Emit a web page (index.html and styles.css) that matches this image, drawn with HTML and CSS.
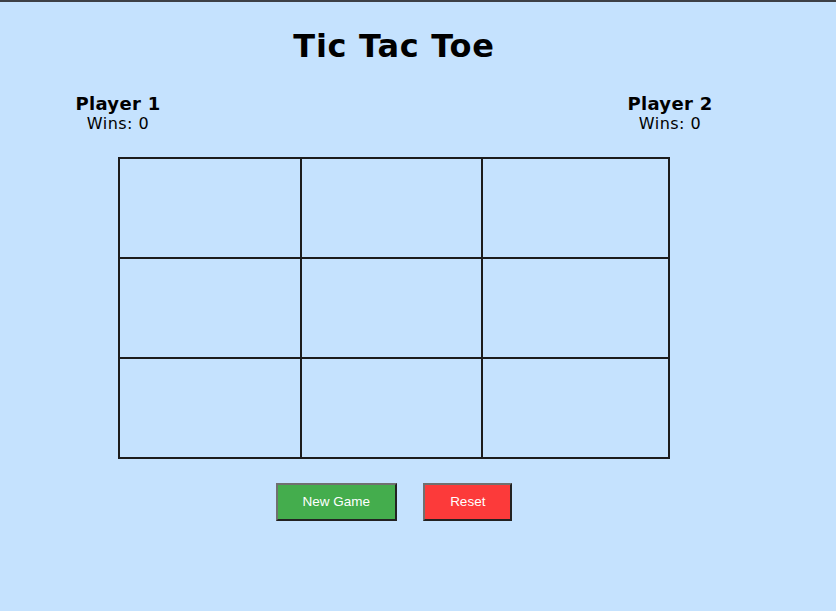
FILE: index.html
```html
<!DOCTYPE html>
<html lang="en">
<head>
<meta charset="utf-8">
<title>Tic Tac Toe</title>
<link rel="stylesheet" href="styles.css">
</head>
<body>
<div class="topbar"></div>
<main class="app">
  <h1 class="title">Tic Tac Toe</h1>
  <div class="players">
    <div class="player">
      <div class="player-name">Player 1</div>
      <div class="player-wins">Wins: 0</div>
    </div>
    <div class="player">
      <div class="player-name">Player 2</div>
      <div class="player-wins">Wins: 0</div>
    </div>
  </div>
  <div class="board">
    <div class="cell"></div><div class="cell"></div><div class="cell"></div>
    <div class="cell"></div><div class="cell"></div><div class="cell"></div>
    <div class="cell"></div><div class="cell"></div><div class="cell"></div>
  </div>
  <div class="controls">
    <button class="btn btn-new">New Game</button>
    <button class="btn btn-reset">Reset</button>
  </div>
</main>
</body>
</html>
```
FILE: styles.css
```css
html, body {
  margin: 0;
  padding: 0;
  background: #c5e2fe;
  height: 100%;
}
body {
  font-family: "DejaVu Sans", Verdana, sans-serif;
  color: #000;
}
.topbar {
  height: 2px;
  background: #3d4046;
}
.app {
  width: 552px;
  margin-left: 118px;
  display: flex;
  flex-direction: column;
}
.title {
  margin: 25px 0 0;
  font-size: 32px;
  letter-spacing: 0.7px;
  font-weight: bold;
  text-align: center;
  line-height: 38px;
}
.players {
  display: flex;
  justify-content: space-between;
  margin: 28px -60px 0;
}
.player {
  width: 120px;
  text-align: center;
}
.player-name {
  font-weight: bold;
  font-size: 18px;
  letter-spacing: 0.3px;
  line-height: 21px;
}
.player-wins {
  font-size: 16px;
  letter-spacing: 0.5px;
  line-height: 20px;
}
.board {
  margin-top: 23px;
  display: grid;
  grid-template-columns: 180px 179px 185px;
  grid-template-rows: 98px 98px 98px;
  gap: 2px;
  padding: 2px;
  background: #1c1c1c;
  width: max-content;
}
.cell {
  background: #c5e2fe;
}
.controls {
  margin-top: 24px;
  display: flex;
  justify-content: center;
  gap: 26px;
}
.btn {
  font-family: "Liberation Sans", Arial, sans-serif;
  font-size: 13.5px;
  line-height: 14px;
  color: #fff;
  padding: 10px 25px;
  border-width: 2px;
  border-style: solid;
  border-color: #707070 #222 #222 #707070;
  cursor: pointer;
}
.btn-new {
  background: #44ad4d;
}
.btn-reset {
  background: #fc3a3a;
}
```
